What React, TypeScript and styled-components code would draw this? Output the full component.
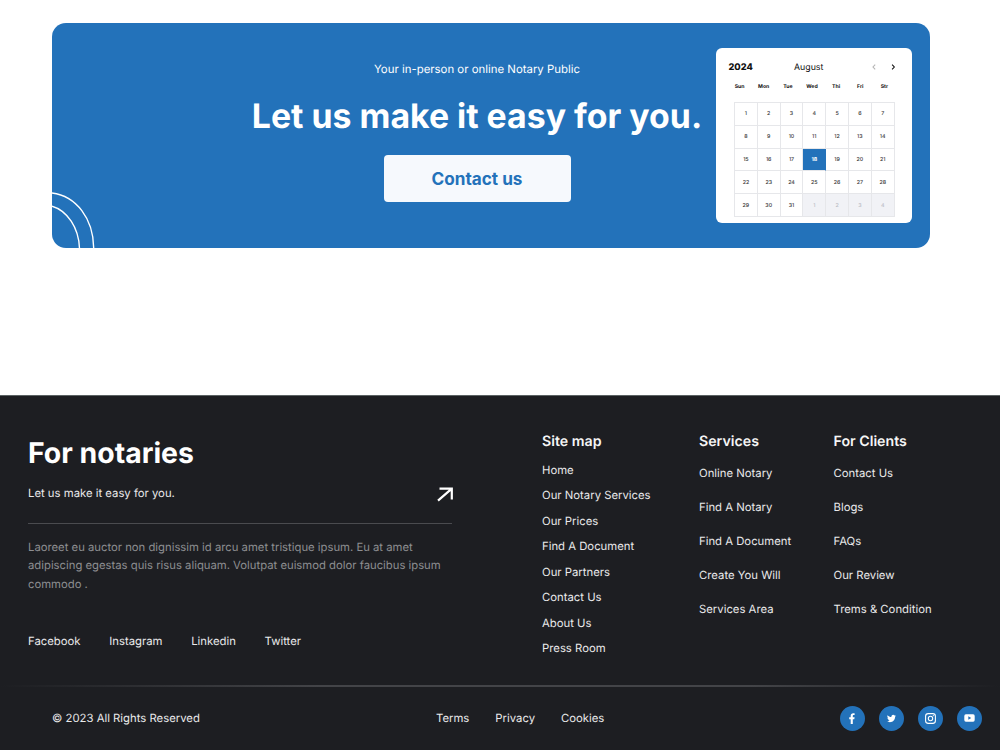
import React from 'react';
import styled, { createGlobalStyle } from 'styled-components';

const BLUE = '#2372ba';

const GlobalStyle = createGlobalStyle`
  *, *::before, *::after { box-sizing: border-box; }
  body { margin: 0; background: #fff; font-family: Inter, "Liberation Sans", sans-serif; text-rendering: geometricPrecision; }
  h2, h3, p, ul { margin: 0; padding: 0; }
  ul { list-style: none; }
  a { color: inherit; text-decoration: none; white-space: nowrap; }
`;

const Page = styled.div`
  width: 1000px;
  height: 750px;
  padding-top: 22.5px;
  display: flex;
  flex-direction: column;
  overflow: hidden;
`;

const Banner = styled.section`
  position: relative;
  flex: none;
  width: 878px;
  height: 225px;
  margin-left: 52px;
  padding: 25px 18px 0 196px;
  display: flex;
  justify-content: space-between;
  align-items: flex-start;
  border-radius: 14px;
  background: ${BLUE};
  overflow: hidden;
`;

const Arcs = styled.svg`
  position: absolute;
  left: 0;
  top: 0;
`;

const Pitch = styled.div`
  width: 458px;
  padding-top: 12px;
  display: flex;
  flex-direction: column;
  align-items: center;
  color: #fff;
`;

const Tagline = styled.p`
  font-size: 11.4px;
  line-height: 18px;
  white-space: nowrap;
`;

const Headline = styled.h2`
  margin-top: 18px;
  font-size: 33.85px;
  line-height: 42px;
  font-weight: 700;
  white-space: nowrap;
`;

const ContactButton = styled.button`
  width: 187px;
  height: 47px;
  margin-top: 17.5px;
  padding: 0;
  border: 0;
  border-radius: 4px;
  background: #f6f9fd;
  color: ${BLUE};
  font: 700 17.15px/47px Inter, sans-serif;
`;

const Calendar = styled.div`
  width: 196px;
  height: 175.5px;
  border-radius: 6px;
  background: #fff;
  color: #111;
`;

const CalendarHead = styled.div`
  height: 36px;
  padding: 3px 16.5px 0 12.5px;
  display: grid;
  grid-template-columns: 65.5px 1fr auto;
  align-items: center;
`;

const Year = styled.span`
  font-size: 9.2px;
  font-weight: 800;
`;

const Month = styled.span`
  font-size: 8.8px;
`;

const Arrows = styled.span`
  display: flex;
  gap: 14px;
`;

const Weekdays = styled.div`
  display: grid;
  width: 169px;
  margin-left: 11.5px;
  grid-template-columns: repeat(7, 24.15px);
  font-size: 5.2px;
  line-height: 6px;
  font-weight: 700;
  text-align: center;
`;

const Days = styled.div`
  display: grid;
  width: 161px;
  margin: 12.5px 0 0 18px;
  grid-template-columns: repeat(7, 22.8px);
  grid-auto-rows: 22.8px;
  border-top: 1px solid #e6e7ea;
  border-left: 1px solid #e6e7ea;
`;

const Day = styled.span<{ $state?: 'selected' | 'outside' }>`
  display: flex;
  align-items: center;
  justify-content: center;
  padding-top: 1px;
  border-right: 1px solid ${p => (p.$state === 'selected' ? BLUE : '#e6e7ea')};
  border-bottom: 1px solid #e6e7ea;
  font-size: 5.3px;
  font-weight: ${p => (p.$state === 'selected' ? 700 : 500)};
  color: ${p => (p.$state === 'selected' ? '#fff' : p.$state === 'outside' ? '#b9bcc4' : '#333')};
  background: ${p => (p.$state === 'selected' ? BLUE : p.$state === 'outside' ? '#f1f2f6' : '#fff')};
`;

const Footer = styled.footer`
  flex: none;
  height: 355px;
  margin-top: 147.5px;
  border-top: 1px solid #5b6263;
  background: #1d1e22;
  color: #e9e9ea;
  font-size: 11.32px;
  line-height: 18px;
`;

const FooterMain = styled.div`
  height: 289px;
  display: grid;
  grid-template-columns: 514px 157px 134.5px 1fr;
  padding: 36px 0 0 28px;
`;

const Notaries = styled.div`
  width: 424px;
`;

const NotariesTitle = styled.h2`
  margin-top: 2px;
  font-size: 28.4px;
  line-height: 38px;
  font-weight: 700;
  color: #fff;
`;

const Invite = styled.div`
  height: 51px;
  margin-top: 1px;
  padding-top: 11px;
  display: flex;
  justify-content: space-between;
  border-bottom: 1px solid #4a4b4f;
`;

const ArrowIcon = styled.svg`
  margin: 3px -2px 0 0;
`;

const Blurb = styled.p`
  margin-top: 14px;
  font-size: 11.29px;
  line-height: 18.4px;
  color: #8d8e91;
  white-space: nowrap;
`;

const SocialLinks = styled.nav`
  display: flex;
  gap: 28.7px;
  margin-top: 38.5px;
`;

const ColumnTitle = styled.h3`
  padding-top: 1px;
  font-size: 14.2px;
  line-height: 18px;
  font-weight: 600;
  color: #f5f5f5;
`;

const LinkList = styled.ul<{ $top: number; $pitch: number }>`
  margin-top: ${p => p.$top}px;
  li { height: ${p => p.$pitch}px; }
`;

const Divider = styled.div`
  height: 2px;
  background: linear-gradient(90deg, #1d1e22 0%, #434448 32%, #434448 75%, #1d1e22 100%);
`;

const FooterBottom = styled.div`
  height: 62px;
  padding: 0 18.5px 0 52px;
  display: grid;
  grid-template-columns: 384px 1fr auto;
  align-items: center;
`;

const Legal = styled.nav`
  display: flex;
  gap: 26px;
`;

const Badges = styled.div`
  display: flex;
  gap: 14px;
`;

const Badge = styled.a`
  width: 25px;
  height: 25px;
  display: flex;
  align-items: center;
  justify-content: center;
  border-radius: 50%;
  background: ${BLUE};
  color: #fff;
`;

const weekdays = ['Sun', 'Mon', 'Tue', 'Wed', 'Thi', 'Fri', 'Str'];
const columns = [
  {
    title: 'Site map', top: 9.5, pitch: 25.5,
    links: ['Home', 'Our Notary Services', 'Our Prices', 'Find A Document', 'Our Partners', 'Contact Us', 'About Us', 'Press Room'],
  },
  {
    title: 'Services', top: 12.5, pitch: 34,
    links: ['Online Notary', 'Find A Notary', 'Find A Document', 'Create You Will', 'Services Area'],
  },
  {
    title: 'For Clients', top: 12.5, pitch: 34,
    links: ['Contact Us', 'Blogs', 'FAQs', 'Our Review', 'Trems & Condition'],
  },
];

const Chevron = ({ d, color }: { d: string; color: string }) => (
  <svg width="5" height="6" viewBox="0 0 5 6" fill="none" stroke={color} strokeWidth="1.1">
    <path d={d} />
  </svg>
);

export default function App() {
  return (
    <>
      <GlobalStyle />
      <Page>
        <Banner>
          <Arcs width="60" height="226" fill="none" stroke="#fff" strokeWidth="1.4">
            <path d="M0 170C24 173 41.7 195.5 41.7 226" />
            <path d="M0 183.2C15 187.5 27 204.5 27.5 226" />
          </Arcs>
          <Pitch>
            <Tagline>Your in-person or online Notary Public</Tagline>
            <Headline>Let us make it easy for you.</Headline>
            <ContactButton>Contact us</ContactButton>
          </Pitch>
          <Calendar>
            <CalendarHead>
              <Year>2024</Year>
              <Month>August</Month>
              <Arrows>
                <Chevron d="M3.2 .6L1 3L3.2 5.4" color="#b5b5b5" />
                <Chevron d="M1.1 .6L3.3 3L1.1 5.4" color="#111" />
              </Arrows>
            </CalendarHead>
            <Weekdays>
              {weekdays.map(d => <span key={d}>{d}</span>)}
            </Weekdays>
            <Days>
              {Array.from({ length: 35 }, (_, i) => (
                <Day key={i} $state={i === 17 ? 'selected' : i > 30 ? 'outside' : undefined}>
                  {i > 30 ? i - 30 : i + 1}
                </Day>
              ))}
            </Days>
          </Calendar>
        </Banner>
        <Footer>
          <FooterMain>
            <Notaries>
              <NotariesTitle>For notaries</NotariesTitle>
              <Invite>
                <span>Let us make it easy for you.</span>
                <ArrowIcon width="17" height="15" viewBox="0 0 17 15" fill="none" stroke="#fff" strokeWidth="2.2">
                  <path d="M2.5 1.6H14.8V12.5M14.8 1.6L1 13.6" />
                </ArrowIcon>
              </Invite>
              <Blurb>
                Laoreet eu auctor non dignissim id arcu amet tristique ipsum. Eu at amet<br />
                adipiscing egestas quis risus aliquam. Volutpat euismod dolor faucibus ipsum<br />
                commodo .
              </Blurb>
              <SocialLinks>
                <a>Facebook</a>
                <a>Instagram</a>
                <a>Linkedin</a>
                <a>Twitter</a>
              </SocialLinks>
            </Notaries>
            {columns.map(c => (
              <div key={c.title}>
                <ColumnTitle>{c.title}</ColumnTitle>
                <LinkList $top={c.top} $pitch={c.pitch}>
                  {c.links.map(l => <li key={l}><a>{l}</a></li>)}
                </LinkList>
              </div>
            ))}
          </FooterMain>
          <Divider />
          <FooterBottom>
            <span>© 2023 All Rights Reserved</span>
            <Legal>
              <a>Terms</a>
              <a>Privacy</a>
              <a>Cookies</a>
            </Legal>
            <Badges>
              <Badge>
                <svg width="6" height="11" viewBox="0 0 6 11" fill="currentColor">
                  <path d="M1.7 11V6.2H.2V4.3H1.7V2.9C1.7 1.1 2.7.2 4.3.2L5.6.3V2H4.7C4 2 3.8 2.4 3.8 2.9V4.3H5.6L5.3 6.2H3.8V11Z" />
                </svg>
              </Badge>
              <Badge>
                <svg width="9" height="9" viewBox="0 0 24 24" fill="currentColor">
                  <path d="M23.95 4.57a10 10 0 0 1-2.82.77 4.96 4.96 0 0 0 2.16-2.72c-.95.56-2 .96-3.13 1.18a4.92 4.92 0 0 0-8.38 4.48C7.69 8.1 4.07 6.13 1.64 3.16a4.92 4.92 0 0 0 1.52 6.57 4.9 4.9 0 0 1-2.23-.61v.06c0 2.38 1.7 4.37 3.95 4.83a5 5 0 0 1-2.21.08 4.94 4.94 0 0 0 4.6 3.42A9.87 9.87 0 0 1 0 19.54a14 14 0 0 0 7.55 2.21c9.05 0 14-7.5 14-13.98 0-.21 0-.42-.02-.63a9.94 9.94 0 0 0 2.42-2.57z" />
                </svg>
              </Badge>
              <Badge>
                <svg width="11" height="11" viewBox="0 0 11 11" fill="none" stroke="currentColor" strokeWidth="1.1">
                  <rect x=".6" y=".6" width="9.8" height="9.8" rx="2.6" />
                  <circle cx="5.5" cy="5.5" r="2.2" />
                  <circle cx="8.3" cy="2.7" r=".6" fill="currentColor" stroke="none" />
                </svg>
              </Badge>
              <Badge>
                <svg width="11" height="8" viewBox="0 0 11 8">
                  <rect x=".3" y=".3" width="10.4" height="7.4" rx="1.6" fill="currentColor" />
                  <path d="M4.3 2.3L7.2 4L4.3 5.7Z" fill={BLUE} />
                </svg>
              </Badge>
            </Badges>
          </FooterBottom>
        </Footer>
      </Page>
    </>
  );
}
